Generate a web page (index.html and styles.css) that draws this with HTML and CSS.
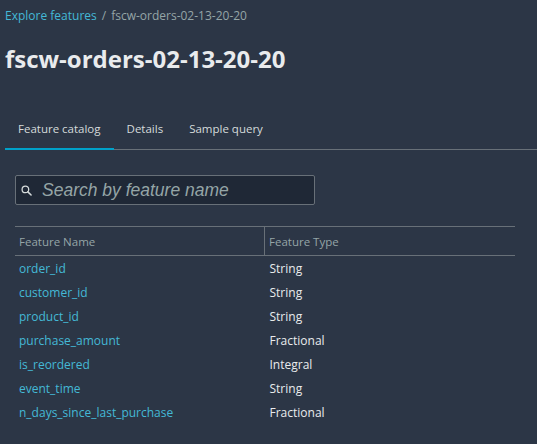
FILE: index.html
```html
<!DOCTYPE html>
<html lang="en">
<head>
<meta charset="utf-8">
<title>fscw-orders-02-13-20-20</title>
<link rel="stylesheet" href="styles.css">
</head>
<body>
<div class="page">
  <nav class="breadcrumb">
    <a class="crumb-link" href="#">Explore features</a>
    <span class="crumb-sep">/</span>
    <span class="crumb-current">fscw-orders-02-13-20-20</span>
  </nav>
  <h1 class="title">fscw-orders-02-13-20-20</h1>
  <div class="tabs">
    <div class="tab active">Feature catalog</div>
    <div class="tab">Details</div>
    <div class="tab">Sample query</div>
  </div>
  <div class="search">
    <svg class="search-icon" width="11" height="11" viewBox="0 0 12 12" aria-hidden="true">
      <circle cx="4.8" cy="4.8" r="3.6" fill="none" stroke="#d5dbdb" stroke-width="1.4"/>
      <line x1="7.5" y1="7.5" x2="11" y2="11" stroke="#d5dbdb" stroke-width="1.6" stroke-linecap="round"/>
    </svg>
    <span class="search-placeholder">Search by feature name</span>
  </div>
  <table class="grid">
    <thead>
      <tr><th class="col-name">Feature Name</th><th class="col-type">Feature Type</th></tr>
    </thead>
    <tbody>
      <tr><td class="name">order_id</td><td class="type">String</td></tr>
      <tr><td class="name">customer_id</td><td class="type">String</td></tr>
      <tr><td class="name">product_id</td><td class="type">String</td></tr>
      <tr><td class="name">purchase_amount</td><td class="type">Fractional</td></tr>
      <tr><td class="name">is_reordered</td><td class="type">Integral</td></tr>
      <tr><td class="name">event_time</td><td class="type">String</td></tr>
      <tr><td class="name">n_days_since_last_purchase</td><td class="type">Fractional</td></tr>
    </tbody>
  </table>
</div>
</body>
</html>
```
FILE: styles.css
```css
html, body {
  margin: 0;
  padding: 0;
  background: #2c3646;
}
body {
  font-family: "Open Sans", "Liberation Sans", sans-serif;
  color: #d5dbdb;
  width: 537px;
  height: 444px;
  overflow: hidden;
}
.breadcrumb {
  display: flex;
  align-items: center;
  gap: 5px;
  padding: 8px 5px 0;
  height: 16px;
  font-size: 12px;
  line-height: 16px;
}
.crumb-link {
  color: #44b9d6;
  text-decoration: none;
}
.crumb-sep {
  color: #95a5a6;
}
.crumb-current {
  color: #95a5a6;
}
.title {
  margin: 20px 0 0 5px;
  font-size: 24px;
  line-height: 30px;
  font-weight: 700;
  color: #e9ebed;
}
.tabs {
  display: flex;
  margin: 36px 0 0 5px;
  border-bottom: 1px solid #687078;
}
.tab {
  padding: 0 13px;
  height: 38px;
  line-height: 38px;
  font-size: 11.5px;
  font-weight: 500;
  color: #d5dbdb;
  border-bottom: 2px solid transparent;
  margin-bottom: -1px;
}
.tab.active {
  border-bottom-color: #00a1c9;
}
.search {
  display: flex;
  align-items: center;
  gap: 10px;
  box-sizing: border-box;
  width: 300px;
  height: 30px;
  margin: 25px 0 0 15px;
  padding: 0 8px 0 5px;
  background: #1f2836;
  border: 1px solid #687078;
  border-radius: 2px;
}
.search-icon {
  flex: none;
}
.search-placeholder {
  font-family: "Liberation Sans", Arial, sans-serif;
  font-size: 17.5px;
  font-style: italic;
  color: #95a5a6;
}
.grid {
  border-collapse: collapse;
  width: 500px;
  margin: 21px 0 0 15px;
  font-size: 12px;
}
.grid thead th {
  height: 28px;
  padding: 0 4px;
  text-align: left;
  font-size: 11.5px;
  font-weight: 500;
  color: #95a5a6;
  border-top: 1px solid #687078;
  border-bottom: 1px solid #687078;
}
.grid .col-name {
  width: 241px;
  border-right: 1px solid #687078;
}
.grid td {
  height: 24px;
  padding: 0 4px;
}
.grid .name {
  color: #44b9d6;
}
.grid .type {
  color: #e9ebed;
  padding-left: 5px;
  font-weight: 500;
}
```
